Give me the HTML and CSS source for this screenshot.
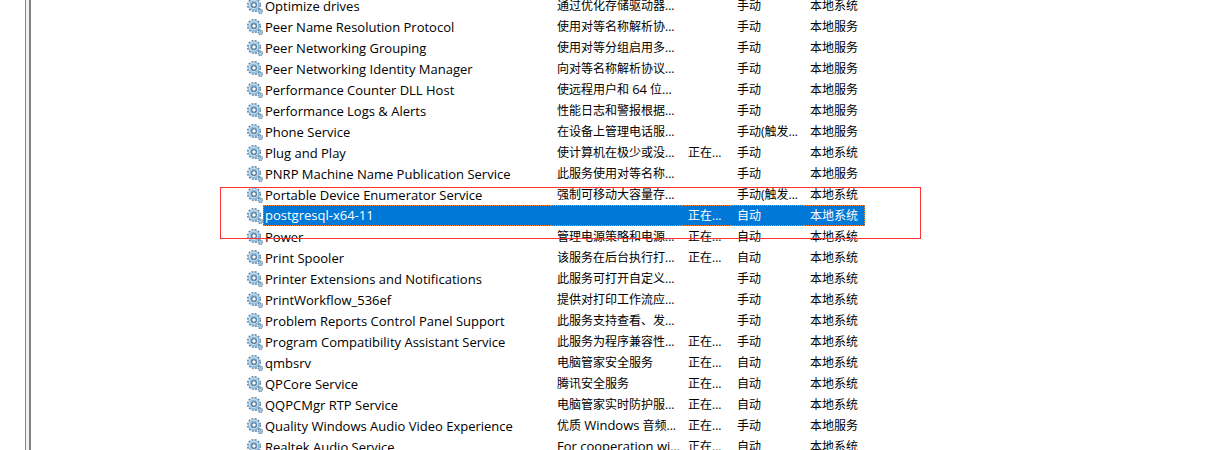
FILE: index.html
```html
<!DOCTYPE html>
<html lang="zh-CN">
<head>
    <meta charset="UTF-8">
    <meta name="viewport" content="width=device-width, initial-scale=1.0">
    <title>服务</title>
    <link rel="stylesheet" href="styles.css">
</head>
<body>
    <!-- gear icon used by every row -->
    <svg class="sprite" width="0" height="0" aria-hidden="true">
        <symbol id="gear" viewBox="0 0 16 16">
            <circle class="teeth" cx="7" cy="7" r="6.1" fill="none" stroke-width="1.8" stroke-dasharray="1.9 1.29"/>
            <circle class="body" cx="7" cy="7" r="4.1" fill="none" stroke-width="3.6"/>
            <circle class="shine" cx="6.5" cy="6.3" r="4.1" fill="none" stroke-width="1"/>
            <circle class="hole" cx="7" cy="7" r="2.3" stroke-width="1.1"/>
            <circle class="teeth" cx="13.3" cy="13.3" r="2" fill="none" stroke-width="1.4" stroke-dasharray="1.1 .5"/>
            <circle class="body" cx="13.3" cy="13.3" r="1" fill="none" stroke-width="1.4"/>
        </symbol>
    </svg>

    <div class="window">
        <div class="tree-pane"></div>
        <div class="splitter"></div>
        <div class="list-pane">
            <table class="services">
                <colgroup>
                    <col class="col-name">
                    <col class="col-desc">
                    <col class="col-status">
                    <col class="col-start">
                    <col class="col-logon">
                </colgroup>
                <tbody id="rows"></tbody>
            </table>
            <div class="marker"></div>
        </div>
    </div>

    <script src="script.js"></script>
</body>
</html>
```
FILE: styles.css
```css
* {
    box-sizing: border-box;
}

body {
    margin: 0;
    background-color: #fff;
    color: #000;
    font-family: "Open Sans", "Noto Sans CJK SC", sans-serif;
    font-size: 12px;
}

.sprite {
    position: absolute;
}

.window {
    display: flex;
    height: 100vh;
    overflow: hidden;
}

.tree-pane {
    width: 25px;
    flex: none;
}

.splitter {
    width: 6px;
    flex: none;
    background-color: #f0f0f0;
    border-left: 1px solid #828790;
    border-right: 2px solid #828282;
}

.list-pane {
    position: relative;
    flex: 1;
    padding-left: 215px;
}

/* the list is scrolled a few pixels into its first row */
.services {
    width: 619px;
    margin-top: -5px;
    table-layout: fixed;
    border-collapse: separate;
    border-spacing: 0;
}

.col-name { width: 305px; }
.col-desc { width: 131px; }
.col-status { width: 49px; }
.col-start { width: 73px; }
.col-logon { width: 61px; }

.services td {
    height: 21px;
    padding: 0 0 0 6px;
    line-height: 21px;
    white-space: nowrap;
    overflow: hidden;
}

.services td.name {
    padding: 0 0 0 1px;
}

.name-box {
    display: flex;
    align-items: center;
    height: 21px;
}

.icon {
    width: 16px;
    height: 16px;
    flex: none;
}

.label {
    flex: 1;
    padding-left: 2px;
}

.label,
.latin {
    font-size: 13px;
    line-height: 20px;
}

.teeth { stroke: #557d9e; }
.body { stroke: #93bddb; }
.shine { stroke: #cfe6f5; }
.hole { fill: #fff; stroke: #4b708d; }

.selected td,
.selected .label {
    background-color: #0078d7;
    color: #fff;
    border-top: 1px dotted #ff8728;
    border-bottom: 1px dotted #ff8728;
    line-height: 19px;
}

.selected td.name {
    background: none;
    border: 0;
}

.selected .label {
    height: 21px;
    padding-left: 1px;
    border-left: 1px dotted #ff8728;
}

.selected td:last-child {
    border-right: 1px dotted #ff8728;
}

.selected .teeth { stroke: #0069bd; }
.selected .body { stroke: #1f88da; }
.selected .shine { stroke: #58aeec; }
.selected .hole { stroke: #0864b0; }

.marker {
    position: absolute;
    top: 187px;
    left: 189px;
    width: 701px;
    height: 52px;
    border: 1px solid #ff3333;
}
```
FILE: script.js
```js
const services = [
    ['Optimize drives', '通过优化存储驱动器...', '', '手动', '本地系统'],
    ['Peer Name Resolution Protocol', '使用对等名称解析协...', '', '手动', '本地服务'],
    ['Peer Networking Grouping', '使用对等分组启用多...', '', '手动', '本地服务'],
    ['Peer Networking Identity Manager', '向对等名称解析协议...', '', '手动', '本地服务'],
    ['Performance Counter DLL Host', '使远程用户和 64 位...', '', '手动', '本地服务'],
    ['Performance Logs & Alerts', '性能日志和警报根据...', '', '手动', '本地服务'],
    ['Phone Service', '在设备上管理电话服...', '', '手动(触发...', '本地服务'],
    ['Plug and Play', '使计算机在极少或没...', '正在...', '手动', '本地系统'],
    ['PNRP Machine Name Publication Service', '此服务使用对等名称...', '', '手动', '本地服务'],
    ['Portable Device Enumerator Service', '强制可移动大容量存...', '', '手动(触发...', '本地系统'],
    ['postgresql-x64-11', '', '正在...', '自动', '本地系统'],
    ['Power', '管理电源策略和电源...', '正在...', '自动', '本地系统'],
    ['Print Spooler', '该服务在后台执行打...', '正在...', '自动', '本地系统'],
    ['Printer Extensions and Notifications', '此服务可打开自定义...', '', '手动', '本地系统'],
    ['PrintWorkflow_536ef', '提供对打印工作流应...', '', '手动', '本地系统'],
    ['Problem Reports Control Panel Support', '此服务支持查看、发...', '', '手动', '本地系统'],
    ['Program Compatibility Assistant Service', '此服务为程序兼容性...', '正在...', '手动', '本地系统'],
    ['qmbsrv', '电脑管家安全服务', '正在...', '自动', '本地系统'],
    ['QPCore Service', '腾讯安全服务', '正在...', '自动', '本地系统'],
    ['QQPCMgr RTP Service', '电脑管家实时防护服...', '正在...', '自动', '本地系统'],
    ['Quality Windows Audio Video Experience', '优质 Windows 音频...', '正在...', '手动', '本地服务'],
    ['Realtek Audio Service', 'For cooperation wi...', '正在...', '自动', '本地系统']
];

const selected = 'postgresql-x64-11';
const rows = document.getElementById('rows');

// latin words are set one pixel larger than the Chinese text
function cell(text) {
    return `<td>${text.replace(/[A-Za-z0-9]+( [A-Za-z0-9]+)*/g, '<span class="latin">$&</span>')}</td>`;
}

for (const [name, ...cells] of services) {
    const tr = document.createElement('tr');
    if (name === selected) {
        tr.className = 'selected';
    }
    tr.innerHTML = `
        <td class="name">
            <div class="name-box">
                <svg class="icon"><use href="#gear"/></svg>
                <span class="label">${name.replace('&', '&amp;')}</span>
            </div>
        </td>` + cells.map(cell).join('');
    rows.appendChild(tr);
}
```
